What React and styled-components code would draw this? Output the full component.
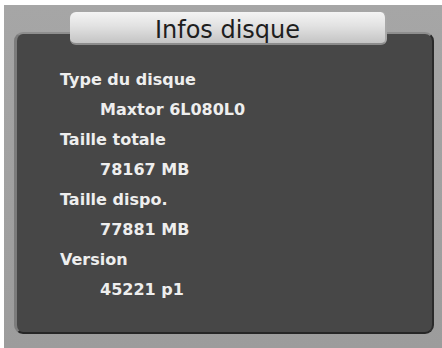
import React from "react";
import styled, { createGlobalStyle } from "styled-components";

const Global = createGlobalStyle`
  html, body { margin: 0; padding: 0; background: #ffffff; }
  body { width: 442px; height: 348px; overflow: hidden; }
`;

const Screen = styled.div`
  box-sizing: border-box;
  width: 442px;
  height: 348px;
  padding: 5px 0 0 4px;
  background: #ffffff;
`;

const Stage = styled.div`
  box-sizing: border-box;
  height: 100%;
  background: linear-gradient(180deg, #a6a6a6 0%, #9c9c9c 100%);
  padding: 7px 8px 14px 10px;
  display: flex;
  flex-direction: column;
`;

const Tab = styled.div`
  position: relative;
  z-index: 1;
  box-sizing: border-box;
  width: 317px;
  height: 33px;
  margin: 0 0 -13px 56px;
  border-radius: 6px;
  background: linear-gradient(180deg, #f4f4f4 0%, #e2e2e2 45%, #c4c4c4 100%);
  border-bottom: 2px solid #8c8c8c;
  border-right: 2px solid #a8a8a8;
  display: flex;
  align-items: center;
  justify-content: center;
  font-family: "DejaVu Sans", Verdana, sans-serif;
  font-size: 24px;
  color: #1e1e1e;
  padding-top: 5px;
`;

const Panel = styled.div`
  box-sizing: border-box;
  flex: 1;
  border-radius: 9px;
  background: #474747;
  border-top: 2px solid #8e8e8e;
  border-left: 3px solid #7c7c7c;
  border-right: 2px solid #2a2a2a;
  border-bottom: 2px solid #262626;
  padding: 31px 0 0 43px;
  font-family: "DejaVu Sans", Verdana, sans-serif;
  font-weight: bold;
  font-size: 16px;
  color: #eeeeee;
`;

const Line = styled.div`
  height: 30px;
  line-height: 30px;
  padding-left: ${(p) => (p.$value ? "40px" : "0")};
  white-space: nowrap;
`;

const rows = [
  ["Type du disque", "Maxtor 6L080L0"],
  ["Taille totale", "78167 MB"],
  ["Taille dispo.", "77881 MB"],
  ["Version", "45221 p1"],
];

export default function App() {
  return (
    <>
      <Global />
      <Screen>
        <Stage>
          <Tab>Infos disque</Tab>
          <Panel>
            {rows.map(([label, value]) => (
              <React.Fragment key={label}>
                <Line>{label}</Line>
                <Line $value>{value}</Line>
              </React.Fragment>
            ))}
          </Panel>
        </Stage>
      </Screen>
    </>
  );
}
